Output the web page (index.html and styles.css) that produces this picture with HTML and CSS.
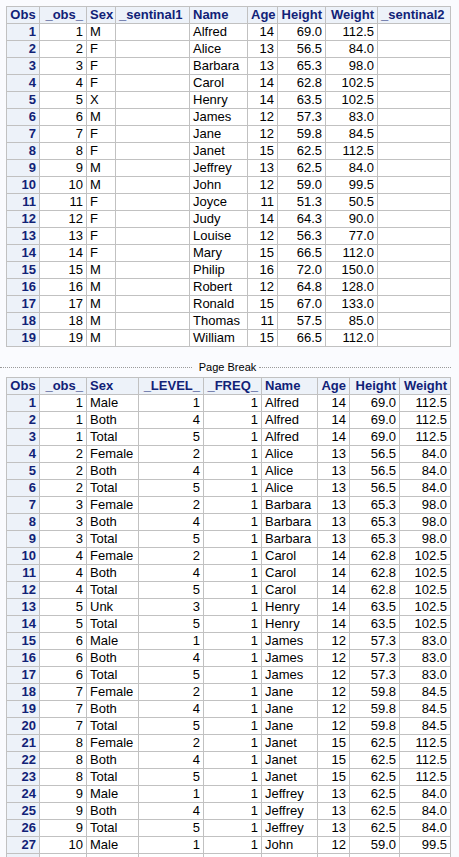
FILE: index.html
```html
<!DOCTYPE html>
<html>
<head>
<meta charset="utf-8">
<link rel="stylesheet" href="styles.css">
</head>
<body>
<div class="page">
<table class="tbl t1">
<colgroup><col class="c33"><col class="c47"><col class="c29"><col class="c74"><col class="c58"><col class="c30"><col class="c48"><col class="c52"><col class="c73"></colgroup>
<thead><tr><th class="hc">Obs</th><th class="hr">_obs_</th><th class="hl">Sex</th><th class="hl">_sentinal1</th><th class="hl">Name</th><th class="hr">Age</th><th class="hr">Height</th><th class="hr">Weight</th><th class="hl">_sentinal2</th></tr></thead>
<tbody>
<tr><th>1</th><td class="r">1</td><td>M</td><td></td><td>Alfred</td><td class="r">14</td><td class="r">69.0</td><td class="r">112.5</td><td></td></tr>
<tr><th>2</th><td class="r">2</td><td>F</td><td></td><td>Alice</td><td class="r">13</td><td class="r">56.5</td><td class="r">84.0</td><td></td></tr>
<tr><th>3</th><td class="r">3</td><td>F</td><td></td><td>Barbara</td><td class="r">13</td><td class="r">65.3</td><td class="r">98.0</td><td></td></tr>
<tr><th>4</th><td class="r">4</td><td>F</td><td></td><td>Carol</td><td class="r">14</td><td class="r">62.8</td><td class="r">102.5</td><td></td></tr>
<tr><th>5</th><td class="r">5</td><td>X</td><td></td><td>Henry</td><td class="r">14</td><td class="r">63.5</td><td class="r">102.5</td><td></td></tr>
<tr><th>6</th><td class="r">6</td><td>M</td><td></td><td>James</td><td class="r">12</td><td class="r">57.3</td><td class="r">83.0</td><td></td></tr>
<tr><th>7</th><td class="r">7</td><td>F</td><td></td><td>Jane</td><td class="r">12</td><td class="r">59.8</td><td class="r">84.5</td><td></td></tr>
<tr><th>8</th><td class="r">8</td><td>F</td><td></td><td>Janet</td><td class="r">15</td><td class="r">62.5</td><td class="r">112.5</td><td></td></tr>
<tr><th>9</th><td class="r">9</td><td>M</td><td></td><td>Jeffrey</td><td class="r">13</td><td class="r">62.5</td><td class="r">84.0</td><td></td></tr>
<tr><th>10</th><td class="r">10</td><td>M</td><td></td><td>John</td><td class="r">12</td><td class="r">59.0</td><td class="r">99.5</td><td></td></tr>
<tr><th>11</th><td class="r">11</td><td>F</td><td></td><td>Joyce</td><td class="r">11</td><td class="r">51.3</td><td class="r">50.5</td><td></td></tr>
<tr><th>12</th><td class="r">12</td><td>F</td><td></td><td>Judy</td><td class="r">14</td><td class="r">64.3</td><td class="r">90.0</td><td></td></tr>
<tr><th>13</th><td class="r">13</td><td>F</td><td></td><td>Louise</td><td class="r">12</td><td class="r">56.3</td><td class="r">77.0</td><td></td></tr>
<tr><th>14</th><td class="r">14</td><td>F</td><td></td><td>Mary</td><td class="r">15</td><td class="r">66.5</td><td class="r">112.0</td><td></td></tr>
<tr><th>15</th><td class="r">15</td><td>M</td><td></td><td>Philip</td><td class="r">16</td><td class="r">72.0</td><td class="r">150.0</td><td></td></tr>
<tr><th>16</th><td class="r">16</td><td>M</td><td></td><td>Robert</td><td class="r">12</td><td class="r">64.8</td><td class="r">128.0</td><td></td></tr>
<tr><th>17</th><td class="r">17</td><td>M</td><td></td><td>Ronald</td><td class="r">15</td><td class="r">67.0</td><td class="r">133.0</td><td></td></tr>
<tr><th>18</th><td class="r">18</td><td>M</td><td></td><td>Thomas</td><td class="r">11</td><td class="r">57.5</td><td class="r">85.0</td><td></td></tr>
<tr><th>19</th><td class="r">19</td><td>M</td><td></td><td>William</td><td class="r">15</td><td class="r">66.5</td><td class="r">112.0</td><td></td></tr>
</tbody>
</table>

<div class="pagebreak"><span class="dots"></span><span class="pb-text">Page Break</span><span class="dots"></span></div>

<table class="tbl t2">
<colgroup><col class="c33"><col class="c47"><col class="c52"><col class="c65"><col class="c58"><col class="c56"><col class="c32"><col class="c50"><col class="c51"></colgroup>
<thead><tr><th class="hc">Obs</th><th class="hr">_obs_</th><th class="hl">Sex</th><th class="hr">_LEVEL_</th><th class="hr">_FREQ_</th><th class="hl">Name</th><th class="hr">Age</th><th class="hr">Height</th><th class="hr">Weight</th></tr></thead>
<tbody>
<tr><th>1</th><td class="r">1</td><td>Male</td><td class="r">1</td><td class="r">1</td><td>Alfred</td><td class="r">14</td><td class="r">69.0</td><td class="r">112.5</td></tr>
<tr><th>2</th><td class="r">1</td><td>Both</td><td class="r">4</td><td class="r">1</td><td>Alfred</td><td class="r">14</td><td class="r">69.0</td><td class="r">112.5</td></tr>
<tr><th>3</th><td class="r">1</td><td>Total</td><td class="r">5</td><td class="r">1</td><td>Alfred</td><td class="r">14</td><td class="r">69.0</td><td class="r">112.5</td></tr>
<tr><th>4</th><td class="r">2</td><td>Female</td><td class="r">2</td><td class="r">1</td><td>Alice</td><td class="r">13</td><td class="r">56.5</td><td class="r">84.0</td></tr>
<tr><th>5</th><td class="r">2</td><td>Both</td><td class="r">4</td><td class="r">1</td><td>Alice</td><td class="r">13</td><td class="r">56.5</td><td class="r">84.0</td></tr>
<tr><th>6</th><td class="r">2</td><td>Total</td><td class="r">5</td><td class="r">1</td><td>Alice</td><td class="r">13</td><td class="r">56.5</td><td class="r">84.0</td></tr>
<tr><th>7</th><td class="r">3</td><td>Female</td><td class="r">2</td><td class="r">1</td><td>Barbara</td><td class="r">13</td><td class="r">65.3</td><td class="r">98.0</td></tr>
<tr><th>8</th><td class="r">3</td><td>Both</td><td class="r">4</td><td class="r">1</td><td>Barbara</td><td class="r">13</td><td class="r">65.3</td><td class="r">98.0</td></tr>
<tr><th>9</th><td class="r">3</td><td>Total</td><td class="r">5</td><td class="r">1</td><td>Barbara</td><td class="r">13</td><td class="r">65.3</td><td class="r">98.0</td></tr>
<tr><th>10</th><td class="r">4</td><td>Female</td><td class="r">2</td><td class="r">1</td><td>Carol</td><td class="r">14</td><td class="r">62.8</td><td class="r">102.5</td></tr>
<tr><th>11</th><td class="r">4</td><td>Both</td><td class="r">4</td><td class="r">1</td><td>Carol</td><td class="r">14</td><td class="r">62.8</td><td class="r">102.5</td></tr>
<tr><th>12</th><td class="r">4</td><td>Total</td><td class="r">5</td><td class="r">1</td><td>Carol</td><td class="r">14</td><td class="r">62.8</td><td class="r">102.5</td></tr>
<tr><th>13</th><td class="r">5</td><td>Unk</td><td class="r">3</td><td class="r">1</td><td>Henry</td><td class="r">14</td><td class="r">63.5</td><td class="r">102.5</td></tr>
<tr><th>14</th><td class="r">5</td><td>Total</td><td class="r">5</td><td class="r">1</td><td>Henry</td><td class="r">14</td><td class="r">63.5</td><td class="r">102.5</td></tr>
<tr><th>15</th><td class="r">6</td><td>Male</td><td class="r">1</td><td class="r">1</td><td>James</td><td class="r">12</td><td class="r">57.3</td><td class="r">83.0</td></tr>
<tr><th>16</th><td class="r">6</td><td>Both</td><td class="r">4</td><td class="r">1</td><td>James</td><td class="r">12</td><td class="r">57.3</td><td class="r">83.0</td></tr>
<tr><th>17</th><td class="r">6</td><td>Total</td><td class="r">5</td><td class="r">1</td><td>James</td><td class="r">12</td><td class="r">57.3</td><td class="r">83.0</td></tr>
<tr><th>18</th><td class="r">7</td><td>Female</td><td class="r">2</td><td class="r">1</td><td>Jane</td><td class="r">12</td><td class="r">59.8</td><td class="r">84.5</td></tr>
<tr><th>19</th><td class="r">7</td><td>Both</td><td class="r">4</td><td class="r">1</td><td>Jane</td><td class="r">12</td><td class="r">59.8</td><td class="r">84.5</td></tr>
<tr><th>20</th><td class="r">7</td><td>Total</td><td class="r">5</td><td class="r">1</td><td>Jane</td><td class="r">12</td><td class="r">59.8</td><td class="r">84.5</td></tr>
<tr><th>21</th><td class="r">8</td><td>Female</td><td class="r">2</td><td class="r">1</td><td>Janet</td><td class="r">15</td><td class="r">62.5</td><td class="r">112.5</td></tr>
<tr><th>22</th><td class="r">8</td><td>Both</td><td class="r">4</td><td class="r">1</td><td>Janet</td><td class="r">15</td><td class="r">62.5</td><td class="r">112.5</td></tr>
<tr><th>23</th><td class="r">8</td><td>Total</td><td class="r">5</td><td class="r">1</td><td>Janet</td><td class="r">15</td><td class="r">62.5</td><td class="r">112.5</td></tr>
<tr><th>24</th><td class="r">9</td><td>Male</td><td class="r">1</td><td class="r">1</td><td>Jeffrey</td><td class="r">13</td><td class="r">62.5</td><td class="r">84.0</td></tr>
<tr><th>25</th><td class="r">9</td><td>Both</td><td class="r">4</td><td class="r">1</td><td>Jeffrey</td><td class="r">13</td><td class="r">62.5</td><td class="r">84.0</td></tr>
<tr><th>26</th><td class="r">9</td><td>Total</td><td class="r">5</td><td class="r">1</td><td>Jeffrey</td><td class="r">13</td><td class="r">62.5</td><td class="r">84.0</td></tr>
<tr><th>27</th><td class="r">10</td><td>Male</td><td class="r">1</td><td class="r">1</td><td>John</td><td class="r">12</td><td class="r">59.0</td><td class="r">99.5</td></tr>
<tr><th>28</th><td class="r">10</td><td>Both</td><td class="r">4</td><td class="r">1</td><td>John</td><td class="r">12</td><td class="r">59.0</td><td class="r">99.5</td></tr>
</tbody>
</table>
</div>
</body>
</html>
```
FILE: styles.css
```css
html, body {
  margin: 0;
  padding: 0;
  background: #fafbfe;
}
body {
  font-family: "Liberation Sans", Arial, sans-serif;
  font-size: 13px;
  color: #000;
}
.page {
  padding: 6px 0 0 6px;
}
.tbl {
  border-collapse: collapse;
  table-layout: fixed;
  width: 445px;
  background: #fff;
}
.tbl th, .tbl td {
  border: 1px solid #c1c1c1;
  padding: 0 3px;
  height: 16px;
  line-height: 16px;
  white-space: nowrap;
  overflow: hidden;
  box-sizing: border-box;
}
.tbl td {
  text-align: left;
  font-weight: normal;
}
.tbl td.r { text-align: right; }
.tbl th {
  background: #edf2f9;
  color: #112277;
  font-weight: bold;
  text-align: right;
}
.tbl thead th.hl { text-align: left; }
.tbl thead th.hr { text-align: right; }
.tbl thead th.hc { text-align: center; }

.c29 { width: 29px; }
.c30 { width: 30px; }
.c32 { width: 32px; }
.c33 { width: 33px; }
.c47 { width: 47px; }
.c48 { width: 48px; }
.c50 { width: 50px; }
.c51 { width: 51px; }
.c52 { width: 52px; }
.c56 { width: 56px; }
.c58 { width: 58px; }
.c65 { width: 65px; }
.c73 { width: 73px; }
.c74 { width: 74px; }

.pagebreak {
  display: flex;
  align-items: center;
  margin: 12px 8px 2px -6px;
  height: 16px;
  font-size: 11px;
  color: #000;
}
.dots {
  flex: 1;
  border-top: 1px dotted #9a9a9a;
  height: 0;
}
.pb-text {
  padding: 0 3px 0 7px;
  line-height: 13px;
}
```
